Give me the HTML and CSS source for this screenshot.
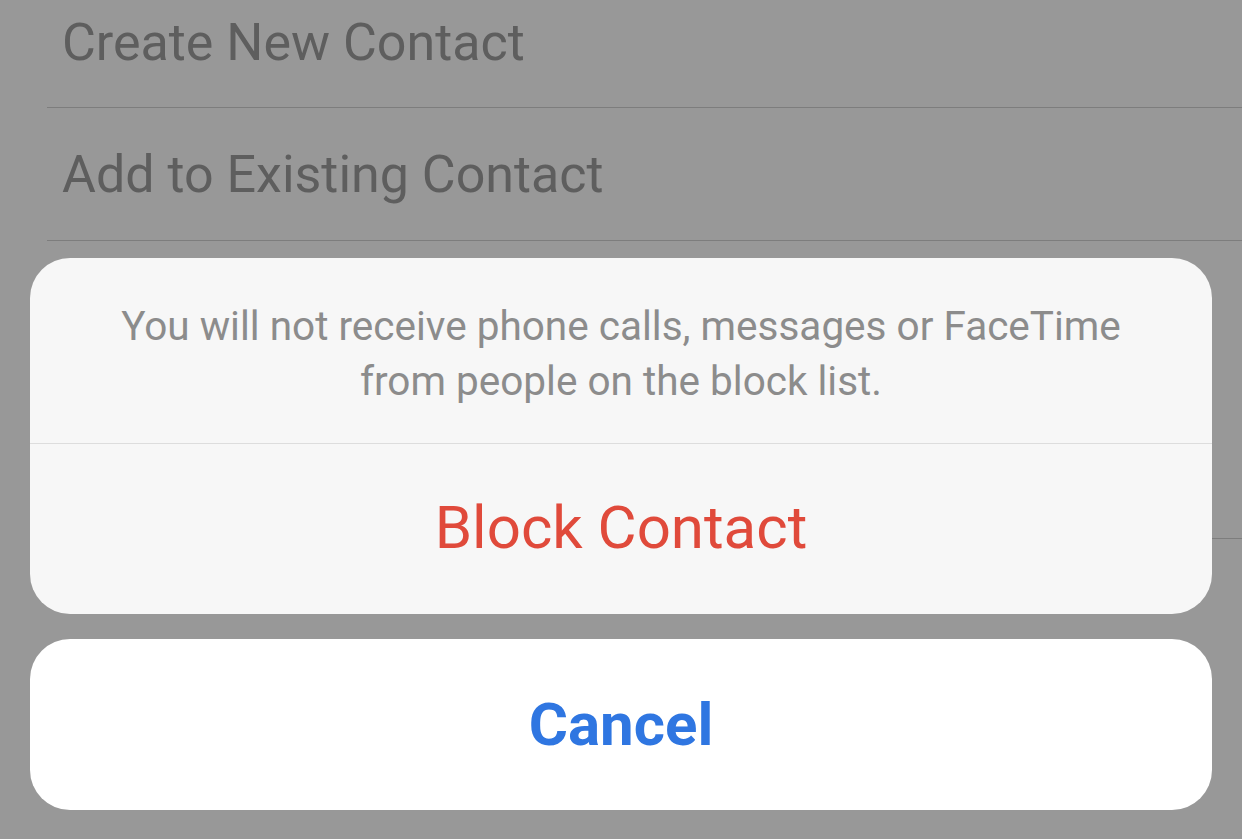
FILE: index.html
```html
<!DOCTYPE html>
<html lang="en">
<head>
  <meta charset="UTF-8">
  <title>Block Contact</title>
  <meta name="viewport" content="width=device-width, initial-scale=1.0">
  <link rel="stylesheet" href="styles.css">
</head>
<body>

<!-- list behind the dimmed overlay -->
<ul class="contact-list">
  <li class="first">Create New Contact</li>
  <li>Add to Existing Contact</li>
  <li class="blank"></li>
</ul>

<!-- action sheet -->
<div class="action-sheet">
  <div class="sheet-group">
    <p class="sheet-message">You will not receive phone calls, messages or FaceTime<br>from people on the block list.</p>
    <button class="sheet-btn danger">Block Contact</button>
  </div>
  <div class="sheet-group cancel-group">
    <button class="sheet-btn cancel">Cancel</button>
  </div>
</div>

</body>
</html>
```

FILE: styles.css
```css
body {
  margin: 0;
  padding: 0;
  background: #989898;
  font-family: Roboto, 'Noto Sans', sans-serif;
  height: 839px;
  overflow: hidden;
  position: relative;
}

.contact-list {
  list-style: none;
  margin: 0;
  padding: 0 0 0 47px;
}

.contact-list li {
  height: 132px;
  border-bottom: 1px solid #7d7d7d;
  padding-left: 15px;
  font-size: 52px;
  color: #5e5e5e;
  display: flex;
  align-items: center;
}

.contact-list li.first {
  box-sizing: border-box;
  height: 108px;
  padding-bottom: 22px;
}

.contact-list li.blank {
  height: 297px;
}

.action-sheet {
  position: absolute;
  left: 30px;
  right: 30px;
  bottom: 29px;
  display: flex;
  flex-direction: column;
  gap: 25px;
}

.sheet-group {
  background: #f7f7f7;
  border-radius: 40px;
  overflow: hidden;
}

.sheet-message {
  margin: 0;
  height: 186px;
  box-sizing: border-box;
  padding-top: 41px;
  text-align: center;
  font-size: 40.5px;
  line-height: 55px;
  color: #8c8c8c;
  border-bottom: 1px solid #dddddd;
}

.sheet-btn {
  display: block;
  width: 100%;
  height: 170px;
  border: none;
  background: none;
  font-family: Roboto, 'Noto Sans', sans-serif;
  font-size: 60px;
  padding: 0;
  cursor: pointer;
}

.sheet-btn.danger {
  color: #e04a3b;
  padding-bottom: 4px;
}

.cancel-group {
  background: #ffffff;
}

.sheet-btn.cancel {
  height: 171px;
  color: #2f76e1;
  font-weight: 700;
}
```
